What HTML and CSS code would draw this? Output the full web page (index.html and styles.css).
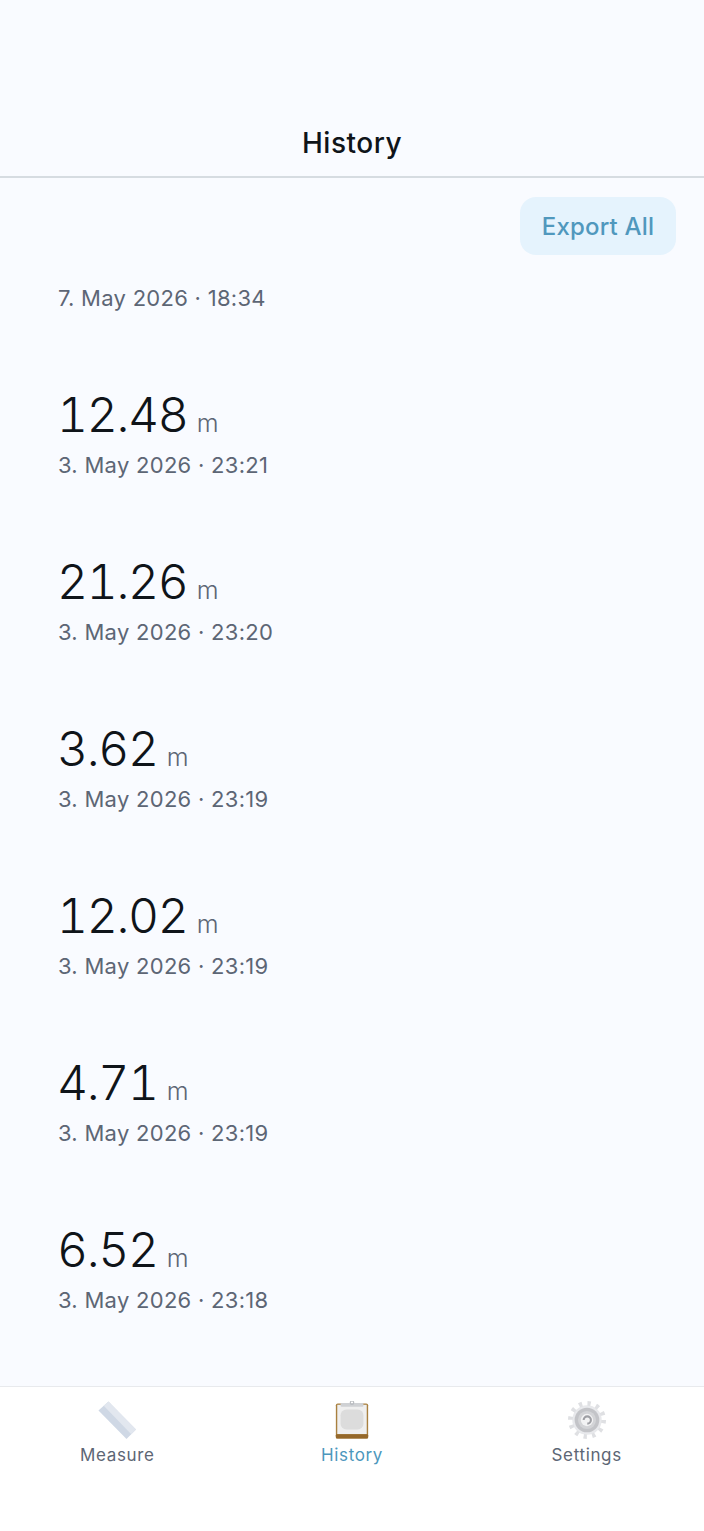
FILE: index.html
```html
<!DOCTYPE html>
<html lang="en">
<head>
<meta charset="utf-8">
<title>History</title>
<link rel="stylesheet" href="styles.css">
</head>
<body>
<div class="app">
  <header class="header"><h1 class="title">History</h1></header>
  <main class="content">
    <div class="toolbar"><button class="export">Export All</button></div>
    <ul class="list">
      <li class="record first"><div class="date">7. May 2026 · 18:34</div></li>
      <li class="record"><div class="reading"><span class="value">12.48</span><span class="unit">m</span></div><div class="date">3. May 2026 · 23:21</div></li>
      <li class="record"><div class="reading"><span class="value">21.26</span><span class="unit">m</span></div><div class="date">3. May 2026 · 23:20</div></li>
      <li class="record"><div class="reading"><span class="value">3.62</span><span class="unit">m</span></div><div class="date">3. May 2026 · 23:19</div></li>
      <li class="record"><div class="reading"><span class="value">12.02</span><span class="unit">m</span></div><div class="date">3. May 2026 · 23:19</div></li>
      <li class="record"><div class="reading"><span class="value">4.71</span><span class="unit">m</span></div><div class="date">3. May 2026 · 23:19</div></li>
      <li class="record"><div class="reading"><span class="value">6.52</span><span class="unit">m</span></div><div class="date">3. May 2026 · 23:18</div></li>
    </ul>
  </main>
  <nav class="tabbar">
    <div class="tab">
      <svg class="icon" viewBox="0 0 40 40" aria-hidden="true">
        <path d="M11 0.500 L40 30 L30 40 L0.500 10 Z" fill="#cfd8e5"/>
        <path d="M11 0.500 L40 30 L35 35 L6 5 Z" fill="#e2e7ef"/>
      </svg>
      <span class="tab-label">Measure</span>
    </div>
    <div class="tab active">
      <svg class="icon" viewBox="0 0 40 40" aria-hidden="true">
        <rect x="3" y="2.500" width="34" height="37" rx="2" fill="#a9803f"/>
        <rect x="4.500" y="4" width="31" height="31" fill="#efefef"/>
        <rect x="8" y="9" width="24" height="21" rx="6" fill="#dcdcdc"/>
        <rect x="8" y="2" width="24" height="4" rx="1" fill="#cfd1d4"/>
        <circle cx="20" cy="1.800" r="1.800" fill="none" stroke="#b9bcc0" stroke-width="1.200"/>
        <rect x="3" y="35" width="34" height="4.500" rx="1" fill="#95682a"/>
      </svg>
      <span class="tab-label">History</span>
    </div>
    <div class="tab">
      <svg class="icon" viewBox="0 0 40 40" aria-hidden="true">
        <circle cx="20" cy="20" r="15.500" fill="#e8e9ec"/>
        <circle cx="20" cy="20" r="17.500" fill="none" stroke="#dfe0e3" stroke-width="5" stroke-dasharray="3.500 5.660"/>
        <circle cx="20" cy="20" r="13" fill="#c3c4c8"/>
        <circle cx="20" cy="20" r="9.500" fill="#d3d4d7"/>
        <circle cx="20" cy="20" r="6.500" fill="#f3f3f4"/>
        <path d="M16.500 20a3.800 3.800 0 1 1 3.800 3.800" fill="none" stroke="#9e9fa4" stroke-width="2.200"/>
      </svg>
      <span class="tab-label">Settings</span>
    </div>
  </nav>
</div>
</body>
</html>
```
FILE: styles.css
```css
* { box-sizing: border-box; }
html, body { margin: 0; padding: 0; }
body { font-family: Inter, "Liberation Sans", sans-serif; background: #f9fbff; }
.app { width: 704px; height: 1531px; display: flex; flex-direction: column; overflow: hidden; }
.header { height: 178px; padding-bottom: 16px; display: flex; align-items: flex-end; justify-content: center; border-bottom: 2px solid #d6dce1; }
.title { margin: 0; font-size: 28px; line-height: 34px; font-weight: 500; letter-spacing: .5px; color: #0f1419; }
.content { flex: 1; min-height: 0; }
.toolbar { display: flex; justify-content: flex-end; padding: 19px 28px 0 0; }
.export { width: 156px; height: 58px; padding: 0; border: 0; border-radius: 16px; background: #e5f3fd; color: #5098bd; font-family: inherit; font-size: 24px; font-weight: 500; letter-spacing: .2px; }
.list { list-style: none; margin: 0; padding: 13px 0 0 58px; }
.record { height: 167px; display: flex; flex-direction: column; justify-content: flex-end; padding-bottom: 18px; }
.record.first { height: 62px; padding-bottom: 18px; }
.reading { display: flex; align-items: baseline; gap: 9px; height: 58px; line-height: 60px; margin-left: -1px; }
.value { font-size: 48px; font-weight: 300; font-variant-numeric: tabular-nums; letter-spacing: -1.300px; color: #0f1419; }
.unit { font-size: 25px; font-weight: 300; color: #5d6675; }
.date { font-size: 22px; line-height: 28px; font-weight: 400; letter-spacing: .28px; color: #5d6675; margin-top: 8px; }
.tabbar { height: 145px; flex: none; background: #ffffff; border-top: 1px solid #e8eaed; display: flex; justify-content: space-between; padding-top: 14px; }
.tab { width: 234.670px; display: flex; flex-direction: column; align-items: center; }
.icon { width: 38px; height: 38px; display: block; filter: blur(.4px); }
.tab-label { margin-top: 5px; font-size: 17px; line-height: 22px; font-weight: 400; letter-spacing: .65px; color: #5d6675; }
.tab.active .tab-label { color: #4c97bd; }
```
